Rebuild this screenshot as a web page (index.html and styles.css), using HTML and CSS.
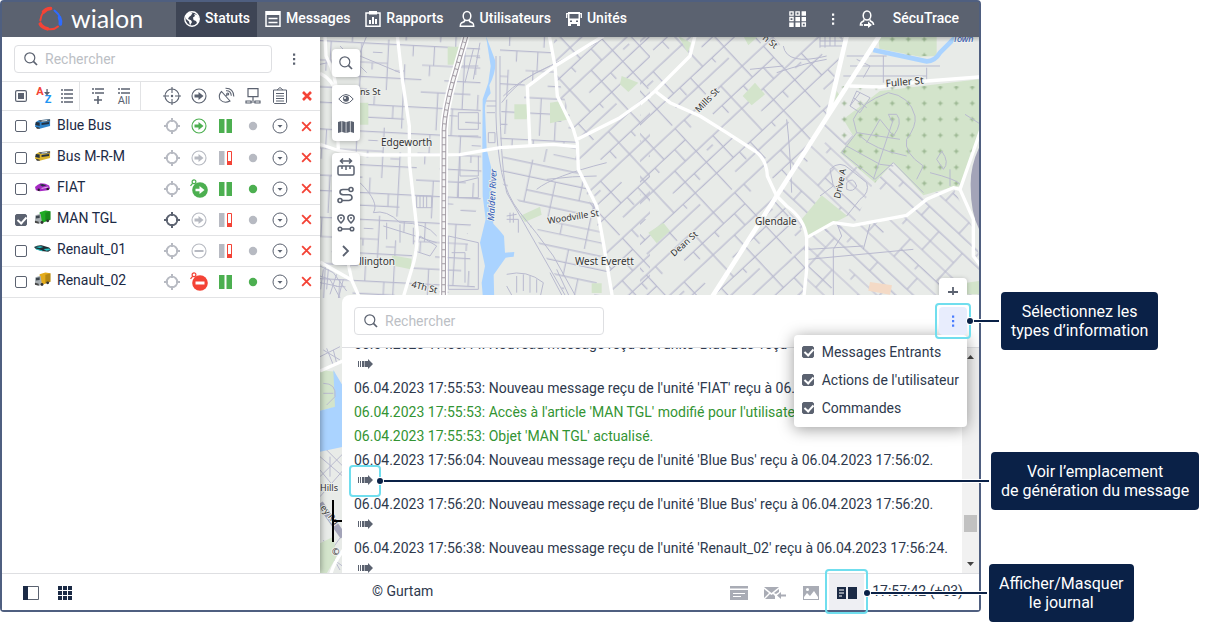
FILE: index.html
```html
<!DOCTYPE html>
<html lang="fr">
<head>
<meta charset="utf-8">
<title>Wialon – Statuts</title>
<link rel="stylesheet" href="styles.css">
</head>
<body>
<svg class="sprite" aria-hidden="true">
  <symbol id="i-search" viewBox="0 0 16 16"><circle cx="6.8" cy="6.8" r="5" fill="none" stroke="currentColor" stroke-width="1.2"/><path d="M10.4 10.4L14 14" stroke="currentColor" stroke-width="1.7"/></symbol>
  <symbol id="i-dots" viewBox="0 0 16 16"><path d="M7 2.500h2.200v2.200H7zM7 7h2.200v2.200H7zM7 11.500h2.200v2.200H7z" fill="currentColor"/></symbol>
  <symbol id="i-target" viewBox="0 0 18 18"><g fill="none" stroke="currentColor"><circle cx="9" cy="9" r="5.300" stroke-width="1.800"/><path d="M9 1v4M9 13v4M1 9h4M13 9h4" stroke-width="2"/></g></symbol>
  <symbol id="i-arrow" viewBox="0 0 18 18"><circle cx="9" cy="9" r="7" fill="none" stroke="currentColor" stroke-width="1.100"/><path d="M4.500 7.500h4V5l5 4-5 4v-2.500h-4z" fill="currentColor"/></symbol>
  <symbol id="i-stop" viewBox="0 0 18 18"><circle cx="9" cy="9" r="7" fill="none" stroke="currentColor" stroke-width="1.100"/><path d="M4.500 8h9v2h-9z" fill="currentColor"/></symbol>
  <symbol id="i-arrow-live" viewBox="0 0 20 20"><circle cx="11" cy="11" r="7.800" fill="currentColor"/><path d="M6.500 9.700h4V7l5 4-5 4v-2.700h-4z" fill="#fff"/><circle cx="5" cy="2.800" r="1.900" fill="#fff" stroke="currentColor" stroke-width="1.200"/><path d="M3.600 4.300L1.500 6.800" stroke="currentColor" stroke-width="1.300"/></symbol>
  <symbol id="i-stop-live" viewBox="0 0 20 20"><circle cx="11" cy="11" r="7.800" fill="currentColor"/><path d="M6.500 9.500h9v3h-9z" fill="#fff"/><circle cx="5" cy="2.800" r="1.900" fill="#fff" stroke="currentColor" stroke-width="1.200"/><path d="M3.600 4.300L1.500 6.800" stroke="currentColor" stroke-width="1.300"/></symbol>
  <symbol id="i-bars-on" viewBox="0 0 14 14"><path d="M0 0h5.500v14H0zM7.500 0H13v14H7.500z" fill="#4caf50"/></symbol>
  <symbol id="i-bars-low" viewBox="0 0 14 14"><path d="M0 0h5.500v14H0z" fill="#b7bac2"/><path d="M8.500.5h4v13h-4z" fill="#fff" stroke="#f44336"/><path d="M8 10h5v4H8z" fill="#f44336"/></symbol>
  <symbol id="i-dot" viewBox="0 0 10 10"><circle cx="5" cy="5" r="4.200" fill="currentColor"/></symbol>
  <symbol id="i-more" viewBox="0 0 18 18"><circle cx="9" cy="9" r="7" fill="none" stroke="currentColor"/><path d="M6.500 8h5L9 10.700z" fill="currentColor"/></symbol>
  <symbol id="i-x" viewBox="0 0 12 12"><path d="M2 2l8 8M10 2l-8 8" stroke="#f44336" stroke-width="1.700"/></symbol>
  <symbol id="i-move" viewBox="0 0 16 12"><path d="M1 3h1v6H1zM3 3h1v6H3zM5 3h2v6H5z" fill="#5b6270"/><path d="M7.500 3H11V1l5 5-5 5V9H7.500z" fill="#5b6270"/></symbol>
  <symbol id="i-user" viewBox="0 0 16 18"><g fill="none" stroke="currentColor" stroke-width="1.500"><ellipse cx="8" cy="6" rx="3.800" ry="4.600"/><path d="M5.500 9.800v1.700L2.300 13Q1.400 13.600 1.300 16.200h13.400Q14.600 13.600 13.700 13l-3.200-1.500V9.800"/></g></symbol>
  <symbol id="i-bus-icon" viewBox="0 0 18 12"><path d="M5 2l12-1v7L6 11 1 9 2 4z" fill="var(--paint)"/><path d="M5 2l12-1v2L7 4z" fill="#555d66"/><path d="M2 4l4 .5V8L1.300 7zM8 5l8-1v2L8 7z" fill="#243140"/><path d="M2 9l4 1v1H3z" fill="#333"/><path d="M8 3l6-.8" stroke="#d7e7ef"/></symbol>
  <symbol id="i-car-icon" viewBox="0 0 18 12"><path d="M1 6Q4 3 7 2l5 .5 4 2 1 3-2 2-9 1-4-1z" fill="var(--paint)"/><path d="M6 3.500l3-.7 4 1.700-4 1z" fill="#263340"/><circle cx="5" cy="9" r="1.300" fill="#222"/><circle cx="14.500" cy="8" r="1.300" fill="#222"/><path d="M8 7.500l7-1.500" stroke="#fff" stroke-opacity=".7"/></symbol>
  <symbol id="i-sport-icon" viewBox="0 0 18 12"><path d="M0 4Q4 1.500 8 2l8 2.500 2 2.500-3 2-7-1-6-2z" fill="#1f2d33"/><path d="M1 4l6-1 3 1-4 1zM10 6l6-.5 1 1.500-4 .8z" fill="var(--paint)"/><path d="M2 6l7 2" stroke="var(--paint)"/></symbol>
  <symbol id="i-truck-icon" viewBox="0 0 18 15"><path d="M6 2l6-2 5.500 1v9L9 13 6 12z" fill="var(--paint)"/><path d="M12 2.500l5.500-1.500v9L12 12z" fill="#000" fill-opacity=".2"/><path d="M1.500 5L7 3.500l1.500 9.500-3 1-4.500-2z" fill="#a8afb3"/><path d="M2 6l4-.8V8L2 8.500z" fill="#3a444c"/><path d="M1 11l4 1v2l-4-1z" fill="#444"/><circle cx="14.500" cy="11" r="1.500" fill="#333"/><circle cx="8.500" cy="12.800" r="1.500" fill="#333"/></symbol>
</svg>

<div class="page">
<div class="app">
  <header class="topbar">
    <a class="brand" href="#">
      <svg width="26" height="26" viewBox="0 0 26 26" aria-hidden="true"><g fill="none" stroke-linecap="round"><path d="M14 2.300Q10 1.800 6.800 5.500Q4 9 3.300 14.500" stroke="#f44336" stroke-width="2"/><path d="M13.500 2.500Q9.500 2.500 6.500 6" stroke="#f44336" stroke-width="3.600"/><path d="M3.500 18Q6 22.500 12.500 23.300Q17.500 23.700 21 20.500" stroke="#f44336" stroke-width="2"/><path d="M3.300 18Q5 21.500 10.500 22.800" stroke="#f44336" stroke-width="3.600"/><path d="M17.500 4.500Q22 8 23 12" stroke="#2f6bff" stroke-width="2"/><path d="M22.500 11.500Q24 15 23.300 18" stroke="#2f6bff" stroke-width="3.600"/></g></svg>
      <span>wialon</span>
    </a>
    <nav class="tabs">
      <a class="tab active" href="#"><svg width="16" height="16" viewBox="0 0 16 16"><circle cx="8" cy="8" r="7.200" fill="none" stroke="#fff" stroke-width="1.400"/><path d="M2.200 3.300L6 1.200l2.500.8L7 4.500 5 6 4 8l3 1.200L8 11l-2 3.500-1-4L2 8 1 5.500zM10 3l3.500 1L15.500 8l-2 5-1.500-3-2.500-1-.5-2.500L11 5z" fill="#fff"/></svg>Statuts</a>
      <a class="tab" href="#"><svg width="16" height="16" viewBox="0 0 16 16"><path d="M1 .8h14v14.400H1z" fill="none" stroke="#fff" stroke-width="1.500"/><path d="M1 1h14v3H1z" fill="#fff"/><path d="M3.500 7.500h9M3.500 11.500h9" stroke="#fff" stroke-width="1.400"/></svg>Messages</a>
      <a class="tab" href="#"><svg width="16" height="16" viewBox="0 0 16 16"><path d="M1 2h14v13.200H1z" fill="none" stroke="#fff" stroke-width="1.500"/><path d="M4 0h8v3.500H4zM4 9h2v4H4zM7 6h2v7H7zM10 8h2v5h-2z" fill="#fff"/></svg>Rapports</a>
      <a class="tab" href="#"><svg width="16" height="18"><use href="#i-user"/></svg>Utilisateurs</a>
      <a class="tab" href="#"><svg width="16" height="16" viewBox="0 0 16 16"><path d="M2 1h12v14h-3v-2H5v2H2z" fill="#fff"/><path d="M3.500 3h9v4.500h-9zM4 9.500h2V11H4zM10 9.500h2V11h-2z" fill="#5b6270"/><path d="M2 2.700H.7V7M14 2.700h1.300V7" fill="none" stroke="#fff" stroke-width="1.300"/></svg>Unités</a>
    </nav>
    <div class="account">
      <button class="bare" aria-label="Applications"><svg width="18" height="16" viewBox="0 0 18 16"><g fill="none" stroke="#fff" stroke-width="1.300"><path d="M.9.900h3.200v3.200H.9zM7 .9h3.200v3.200H7zM.9 6.500h3.200v3.200H.9zM13.200 12h3.200v3.200h-3.200z"/></g><path d="M12.600.2H17v4.500h-4.400zM6.400 6H11v4.300H6.400zM12.600 6H17v4.300h-4.400zM.2 11.400h4.500v4.500H.2zM6.400 11.400H11v4.500H6.400z" fill="#fff"/></svg></button>
      <button class="bare" aria-label="Plus"><svg width="16" height="16"><use href="#i-dots"/></svg></button>
      <button class="bare" aria-label="Profil"><svg width="16" height="18" viewBox="0 0 16 18"><g fill="none" stroke="#fff" stroke-width="1.500"><ellipse cx="8" cy="5.500" rx="3.800" ry="4.500"/><path d="M5 9.500l-.3 1.500Q1.500 12 1.400 15H4M11 9.500l.3 1.500q3.200 1 3.300 4"/></g><path d="M5 14h4v-2.500l4 3.500-4 3V16H5z" fill="#fff"/></svg></button>
      <span>SécuTrace</span>
    </div>
  </header>

  <div class="workspace">
    <section class="sidebar">
      <div class="finder">
        <label class="search"><svg width="16" height="16"><use href="#i-search"/></svg><input type="text" placeholder="Rechercher" aria-label="Rechercher une unité"></label>
        <button class="bare" aria-label="Options"><svg width="16" height="16"><use href="#i-dots"/></svg></button>
      </div>
      <div class="tools">
        <div class="tool-set first">
          <button class="bare" aria-label="Tout sélectionner"><svg width="12" height="12" viewBox="0 0 12 12"><rect x=".6" y=".6" width="10.800" height="10.800" rx="1.500" fill="none" stroke="currentColor" stroke-width="1.200"/><path d="M3 3h6v6H3z" fill="currentColor"/></svg></button>
          <button class="bare sort" aria-label="Trier de A à Z"><b class="sort-a">A</b><b class="sort-z">Z</b><svg width="6" height="7" viewBox="0 0 6 7"><path d="M2.400 0h1.300v3H6L3 6.500 0 3h2.400z" fill="currentColor"/></svg></button>
          <button class="bare" aria-label="Liste"><svg width="12" height="14" viewBox="0 0 12 14"><path d="M0 1h2M0 5h2M0 9h2M0 13h2M3 1h9M3 5h9M3 9h9M3 13h9" stroke="currentColor" stroke-width="1.600"/></svg></button>
        </div>
        <div class="tool-set second">
          <button class="bare" aria-label="Ajouter"><svg width="14" height="18" viewBox="0 0 14 18"><path d="M1 2h2M1 6h2M4 2h9M4 6h9M7 9v8M3 13h8" stroke="currentColor" stroke-width="1.600"/></svg></button>
          <button class="bare all" aria-label="Ajouter tout"><svg width="14" height="7" viewBox="0 0 14 7"><path d="M1 1h2M1 5h2M4 1h9M4 5h9" stroke="currentColor" stroke-width="1.500"/></svg><span>All</span></button>
        </div>
        <div class="tool-cols">
          <button class="bare" aria-label="Suivre"><svg width="18" height="18" viewBox="0 0 18 18"><g fill="none" stroke="currentColor" stroke-width="1.100"><circle cx="9" cy="9" r="7"/><path d="M9 0v6M9 12v6M0 9h6M12 9h6"/></g><circle cx="9" cy="9" r="1.200" fill="currentColor"/></svg></button>
          <button class="bare" aria-label="Mouvement"><svg width="18" height="18"><use href="#i-arrow"/></svg></button>
          <button class="bare" aria-label="Connexion satellite"><svg width="18" height="18" viewBox="0 0 18 18"><g fill="none" stroke="currentColor" stroke-width="1.100"><path d="M4.500 4.500Q1 8 3 12.500Q7 17 13 14zM8.500 9.500l1.500-2"/><circle cx="10.700" cy="7" r="1"/><path d="M9 3.800q5-.5 5.300 5M8.500 1.200Q16.500 1 16.800 9.500"/></g></svg></button>
          <button class="bare" aria-label="Capteurs"><svg width="16" height="16" viewBox="0 0 16 16"><path d="M3 .7h10v8H3zM8 9v4M1 15v-2h5v2zM10 15v-2h5v2zM6 14h4" fill="none" stroke="currentColor" stroke-width="1.200"/></svg></button>
          <button class="bare" aria-label="Rapport"><svg width="16" height="18" viewBox="0 0 16 18"><path d="M1.500 3h13v12.500l-1 1h-11l-1-1zM5 3l3-2.500L11 3M4 6.500h8M4 9h8M4 11.500h8M4 14h8" fill="none" stroke="currentColor"/></svg></button>
          <button class="bare" aria-label="Tout retirer"><svg width="12" height="12" viewBox="0 0 12 12"><path d="M2 2l8 8M10 2l-8 8" stroke="#f44336" stroke-width="2.600"/></svg></button>
        </div>
      </div>
      <table class="units">
        <colgroup><col class="c-check"><col class="c-pic"><col><col class="c-act"><col class="c-act"><col class="c-act"><col class="c-act"><col class="c-act"><col class="c-act"></colgroup>
        <tbody>
        <tr><td><input class="tick" type="checkbox" id="u1"></td><td><svg class="pic blue" width="17" height="12"><use href="#i-bus-icon"/></svg></td><td class="name"><label for="u1">Blue Bus</label></td>
          <td class="off"><svg width="18" height="18"><use href="#i-target"/></svg></td><td class="ok"><svg width="18" height="18"><use href="#i-arrow"/></svg></td><td><svg width="14" height="14"><use href="#i-bars-on"/></svg></td><td class="off"><svg width="10" height="10"><use href="#i-dot"/></svg></td><td><svg width="18" height="18"><use href="#i-more"/></svg></td><td><svg width="13" height="13"><use href="#i-x"/></svg></td></tr>
        <tr><td><input class="tick" type="checkbox" id="u2"></td><td><svg class="pic yellow" width="17" height="12"><use href="#i-bus-icon"/></svg></td><td class="name"><label for="u2">Bus M-R-M</label></td>
          <td class="off"><svg width="18" height="18"><use href="#i-target"/></svg></td><td class="off"><svg width="18" height="18"><use href="#i-arrow"/></svg></td><td><svg width="14" height="14"><use href="#i-bars-low"/></svg></td><td class="off"><svg width="10" height="10"><use href="#i-dot"/></svg></td><td><svg width="18" height="18"><use href="#i-more"/></svg></td><td><svg width="13" height="13"><use href="#i-x"/></svg></td></tr>
        <tr><td><input class="tick" type="checkbox" id="u3"></td><td><svg class="pic purple" width="17" height="12"><use href="#i-car-icon"/></svg></td><td class="name"><label for="u3">FIAT</label></td>
          <td class="off"><svg width="18" height="18"><use href="#i-target"/></svg></td><td class="ok"><svg width="20" height="20"><use href="#i-arrow-live"/></svg></td><td><svg width="14" height="14"><use href="#i-bars-on"/></svg></td><td class="ok"><svg width="10" height="10"><use href="#i-dot"/></svg></td><td><svg width="18" height="18"><use href="#i-more"/></svg></td><td><svg width="13" height="13"><use href="#i-x"/></svg></td></tr>
        <tr><td><input class="tick" type="checkbox" id="u4" checked></td><td><svg class="pic green" width="17" height="15"><use href="#i-truck-icon"/></svg></td><td class="name"><label for="u4">MAN TGL</label></td>
          <td><svg width="18" height="18"><use href="#i-target"/></svg></td><td class="off"><svg width="18" height="18"><use href="#i-arrow"/></svg></td><td><svg width="14" height="14"><use href="#i-bars-low"/></svg></td><td class="off"><svg width="10" height="10"><use href="#i-dot"/></svg></td><td><svg width="18" height="18"><use href="#i-more"/></svg></td><td><svg width="13" height="13"><use href="#i-x"/></svg></td></tr>
        <tr><td><input class="tick" type="checkbox" id="u5"></td><td><svg class="pic cyan" width="17" height="12"><use href="#i-sport-icon"/></svg></td><td class="name"><label for="u5">Renault_01</label></td>
          <td class="off"><svg width="18" height="18"><use href="#i-target"/></svg></td><td class="off"><svg width="18" height="18"><use href="#i-stop"/></svg></td><td><svg width="14" height="14"><use href="#i-bars-low"/></svg></td><td class="off"><svg width="10" height="10"><use href="#i-dot"/></svg></td><td><svg width="18" height="18"><use href="#i-more"/></svg></td><td><svg width="13" height="13"><use href="#i-x"/></svg></td></tr>
        <tr><td><input class="tick" type="checkbox" id="u6"></td><td><svg class="pic gold" width="17" height="15"><use href="#i-truck-icon"/></svg></td><td class="name"><label for="u6">Renault_02</label></td>
          <td class="off"><svg width="18" height="18"><use href="#i-target"/></svg></td><td class="bad"><svg width="20" height="20"><use href="#i-stop-live"/></svg></td><td><svg width="14" height="14"><use href="#i-bars-on"/></svg></td><td class="ok"><svg width="10" height="10"><use href="#i-dot"/></svg></td><td><svg width="18" height="18"><use href="#i-more"/></svg></td><td><svg width="13" height="13"><use href="#i-x"/></svg></td></tr>
        </tbody>
      </table>
    </section>

    <section class="map-area">
      <svg class="map" viewBox="320 37 659 536" preserveAspectRatio="xMinYMin slice" role="img" aria-label="Carte">
        <defs>
          <pattern id="p-ortho" width="270" height="230" patternUnits="userSpaceOnUse" patternTransform="rotate(3) scale(1.15)"><path d="M0 12H270M0 62H180M60 100H270M0 132H130M0 172H270M120 205H230M30 12V62M85 0V12M85 230V172M110 12V172M180 0V132M225 62V230M150 132V172M45 132V230M245 12V40M200 172V205M20 62V90M140 35H165M140 62V80M200 80H225M75 190H100" class="street"/></pattern>
          <pattern id="p-diag" width="290" height="210" patternUnits="userSpaceOnUse" patternTransform="rotate(-43) scale(1.25)"><path d="M0 10H290M0 46H200M0 84H290M90 120H290M0 156H290M0 184H120M60 10V156M130 0V46M130 84V184M130 210V184M200 10V210M255 84V156M20 156V210M30 46V70M165 46V84M230 10V34M160 120V140M90 156V170M275 156V180M100 46V62M220 100H240M235 184H290" class="street"/></pattern>
          <pattern id="p-long" width="260" height="190" patternUnits="userSpaceOnUse" patternTransform="rotate(43) scale(1.2)"><path d="M0 8H260M0 38H260M0 70H180M0 100H260M60 134H260M0 160H260M40 8V38M100 38V100M180 38V134M230 100V160M60 100V160M140 0V8M140 160V190M210 8V24M20 70V86M120 134V148" class="street"/></pattern>
          <pattern id="p-tilt" width="280" height="200" patternUnits="userSpaceOnUse" patternTransform="rotate(12) scale(1.15)"><path d="M0 10H280M0 45H280M50 80H280M0 112H200M0 148H280M100 176H280M50 0V112M120 45V148M190 10V80M230 80V200M160 148V176M80 148V200M20 112V148" class="street"/></pattern>
          <pattern id="p-cross" x="589" y="226" width="48" height="48" patternUnits="userSpaceOnUse"><path d="M24 17v14M17 24h14" stroke="#8dab83" stroke-width="3"/></pattern>
        </defs>
        <rect x="320" y="37" width="1600" height="1200" fill="#e8ebe8"/>
        <g transform="translate(320 36) scale(.33333)">
          <path d="M0 0H480L485 480 440 600 470 786H0Z" fill="url(#p-ortho)"/>
          <path d="M540 0H690L700 90 620 150 540 190Z" fill="url(#p-ortho)"/>
          <path d="M545 200L625 150 705 95 775 320 540 335Z" fill="url(#p-ortho)"/>
          <path d="M550 345L772 335 780 400 830 510 700 560 600 500 545 440Z" fill="url(#p-tilt)"/>
          <path d="M700 0H990V800H885L850 620 775 400 772 320 712 180Z" fill="url(#p-diag)"/>
          <path d="M630 570L830 520 880 786H740Z" fill="url(#p-tilt)"/>
          <g class="green">
            <path d="M383 32h36v54h-36zM120 200h25v66h-25zM905 120L955 140 925 168 900 145ZM583 205h42l-5 45h-37zM690 200l35-5 22 55-57 12zM600 540l60-28 5 24-50 22zM215 658l60 10-3 32-48-10zM815 742h30v29h-30z"/>
          </g>
          <g class="street">
            <path d="M0 85L120 60 240 110M60 30L140 110M140 0L110 75M120 440Q180 500 160 530Q200 520 240 560Q320 560 350 600M190 570L350 620M200 560v50M240 565v55M280 575v50M290 480h45v35h-45zM300 480v35M310 480v35M320 480v35M300 600l50 30-20 30-45-15z"/>
            <path d="M0 690l40 20 40 55M0 720l30 10 30 56M0 740l50 10M10 700l-8 60M25 700l-5 60M50 715l-20 60M70 730l-15 56"/>
            <path d="M415 230h60v50h-60zM415 300h60M420 360v60h55v-60M415 440l60-15v60h-60zM385 600l90 20v140h-90zM395 650h40v90M440 30l-30 90M460 40l-25 100M480 20l-20 110M430 60h50M425 90h50"/>
            <path d="M528 60V240Q530 330 545 410Q560 480 600 530Q650 590 700 660L770 786M540 60V230Q545 400 560 470L740 786M498 195h30M500 230h25M500 210h28M505 290h20v30h-20zM550 180Q600 130 690 90M545 200Q580 150 640 115L830 20"/>
            <path d="M680 430Q760 420 830 420M650 460Q700 420 860 380M560 540l30-5M560 550h35v40M570 530v30M580 530v30M560 715Q620 700 670 740L660 786H580L560 750M590 720v50M610 715v50M630 720v50M650 730v40M690 710l40 76M710 700l40 86"/>
          </g>
          <path class="water" d="M498 0L525 72Q530 105 508 148L512 172Q495 190 495 220L500 340 515 400 514 490 520 563 540 585 552 600 555 650 583 648 581 662 557 665 521 716 523 800H490L485 740 495 690 480 620 497 550 488 480 487 320 488 190 505 140 512 90Z"/>
          <g class="road">
            <path d="M232 0L247 130 268 270V380L292 590Q292 650 275 700L248 790M15 0L18 60Q50 120 50 180L55 345M0 112Q38 130 48 170M0 325L60 345 140 357 420 356 540 335 700 325 770 332"/>
            <path d="M0 678L95 732M80 660L95 732 125 800M850 0L705 90 622 152 630 330M688 0L705 90 712 180 760 280 772 320 775 400 830 510 850 620 880 800M990 180L900 245 772 310"/>
          </g>
          <path class="rail-edge" d="M438 0L400 130Q375 220 372 280L370 1000"/>
          <path class="rail-line" d="M438 0L400 130Q375 220 372 280L370 1000"/>
          <path class="rail-dash" d="M438 0L400 130Q375 220 372 280L370 1000"/>
        </g>
        <g transform="translate(640 36) scale(.33333)">
          <path d="M30 0H610L560 245 410 480 215 786H0V0Z" fill="url(#p-diag)"/>
          <path d="M410 480L565 240 640 300 605 350 680 420 700 440 640 568 500 605Z" fill="url(#p-long)"/>
          <path d="M500 605L580 560 640 568 800 538 700 440 760 385 850 478 940 455 1010 600 1030 800H490Z" fill="url(#p-long)"/>
          <path d="M215 786L410 480 500 605 490 786Z" fill="url(#p-diag)"/>
          <path class="green" d="M720 165L1030 128V270L960 450 930 455 850 478 760 380 705 440 600 350 640 300 610 250ZM715 0H890V60L840 62 718 38ZM545 478L622 540 505 600 485 550ZM345 140L375 175 335 208 308 180ZM70 560L90 585 50 622 25 590ZM310 0h45l-30 28zM115 0l28 50 10-30zM590 165l10 15-20 35zM980 740l40-5v40h-40z"/>
          <path d="M600 150H1030V270L960 450 850 478 760 380 705 440 600 350ZM715 0H890V60H800Z" fill="url(#p-cross)"/>
          <g class="street">
            <path d="M640 250Q660 200 745 170Q810 180 825 240Q830 270 800 310Q790 350 850 390L830 430M640 250L650 290 780 310M650 290L620 330 605 350 705 430 760 380 850 470M680 320L720 250 760 300Q790 260 770 235H745L755 255M660 300Q700 340 800 360M620 330L720 385 760 390M700 430L760 250M905 345Q930 380 910 400L890 370ZM870 410Q950 430 960 445M930 400v50M975 235L1030 270"/>
            <path d="M430 30Q440 90 560 60M410 110Q500 80 560 70M330 100L430 90M620 60h120M630 90h270M610 120h250M730 60v80M860 95v40M650 70l40 20-20 35"/>
            <path d="M540 35V0M555 35V0M570 30V0M585 30V0M540 15h80M540 30h70M650 165l40 20-30 45-30-20zM640 185l40 30M660 170l-30 40"/>
            <path d="M570 400Q600 370 630 400L680 440Q690 470 660 490L620 540M570 400L580 450 540 480M620 440Q640 420 650 450Q640 470 620 460ZM455 470Q450 330 440 250M590 560L605 600 580 640V780M690 565L670 640M505 640L670 630M505 670L820 640"/>
          </g>
          <path class="water-line" d="M700 42L860 76Q885 76 900 50L940 10 1030 -20"/>
          <path d="M1030 310Q990 380 992 450Q992 550 1030 600Z" fill="#a3a4b8"/>
          <path d="M690 738L756 748 750 776 685 764Z" fill="#f4dac6"/>
          <g class="road">
            <path d="M165 0L150 60 45 165 0 205M45 165L90 200 180 240 260 290 345 345Q380 370 382 420L410 480 440 510Q495 550 500 605V700L490 800M500 605L580 560 640 568 800 538 860 490 940 455 960 460 1030 260M960 460L1000 550V660L1030 700M628 150L720 153 860 135 1030 122"/>
            <path class="wide" d="M620 0L565 235M718 0L560 245 410 480 205 800"/>
          </g>
        </g>
        <g transform="translate(320 290) scale(.33333)">
          <path class="green" d="M0 240L45 245 50 350 0 362Z"/>
          <path class="water" d="M40 240L70 290V470L0 485V362L45 350Z"/>
          <path class="street" d="M10 180L60 210M0 200l60-30M20 175l20 50M40 180l10 40M10 280Q50 280 45 320L20 345M10 310h30M0 500L70 560M0 560L70 490M0 620L70 540M20 480L70 530M0 540l50 60M30 500v60M0 780l70 50M20 800l50-70M0 830l50-40M10 750l50 90"/>
          <path class="road" d="M0 243L70 212"/>
          <path d="M0 640L70 740" stroke="#a3a4b8" stroke-width="20"/>
          <path class="green" d="M0 760L40 740 50 800 20 850H0Z"/>
          <path class="road" d="M70 780Q40 820 30 860"/>
        </g>
        <g class="place">
          <text x="381" y="146">Edgeworth</text><text x="359" y="265">llington</text><text x="575" y="265">West Everett</text><text x="755" y="225">Glendale</text>
          <text x="886" y="87" transform="rotate(-5 886 87)">Fuller St</text>
        </g>
        <g class="lane">
          <text x="360" y="95">ns St</text><text x="411" y="287" transform="rotate(14 411 287)">4Th St</text><text x="548" y="224" transform="rotate(-9 548 224)">Woodville St</text>
          <text x="699" y="113" transform="rotate(-46 699 113)">Mills St</text><text x="674" y="257" transform="rotate(-42 674 257)">Dean St</text><text x="840" y="199" transform="rotate(-78 840 199)">Drive A</text><text x="762" y="39" transform="rotate(38 762 39)">n St</text>
          <text x="320" y="491">Hills</text><text x="320" y="508" transform="rotate(50 320 508)">ey Rd</text><text x="332" y="555">©</text>
          <text class="river" x="494" y="221" transform="rotate(-87 494 221)">Malden River</text><text class="river" x="953" y="42">Town</text>
        </g>
        <path d="M333 500v42M333 521h12" stroke="#000" stroke-width="2" fill="none"/>
      </svg>
      <div class="map-tools">
        <div class="map-group"><button class="bare" aria-label="Rechercher sur la carte"><svg width="16" height="16"><use href="#i-search"/></svg></button></div>
        <div class="map-group"><button class="bare" aria-label="Visibilité"><svg width="16" height="12" viewBox="0 0 16 12"><path d="M.8 6Q8-3 15.200 6Q8 15 .8 6Z" fill="none" stroke="currentColor"/><circle cx="8" cy="5.800" r="3" fill="currentColor"/><circle cx="7" cy="5" r="1" fill="#fff"/></svg></button>
        <button class="bare" aria-label="Couches"><svg width="16" height="12" viewBox="0 0 16 12"><path d="M0 1l3.500-1v11L0 12zM4.200 0l3.500 1v11l-3.500-1zM8.400 1l3.500-1v11l-3.500 1zM12.600 0L16 1v11l-3.400-1z" fill="currentColor"/></svg></button></div>
        <div class="map-group tall"><button class="bare" aria-label="Mesurer"><svg width="18" height="18" viewBox="0 0 18 18"><g fill="none" stroke="currentColor" stroke-width="1.500"><rect x="1" y="8" width="16" height="9" rx="1.500"/><path d="M5 8v3M9 8v4M13 8v3M3.500 3h11M6 .5L3.500 3 6 5.500M12 .5L14.500 3 12 5.500"/></g></svg></button>
        <button class="bare" aria-label="Itinéraire"><svg width="18" height="18" viewBox="0 0 18 18"><g fill="none" stroke="currentColor" stroke-width="1.600"><circle cx="14" cy="3.500" r="2"/><circle cx="3" cy="14.500" r="2"/><path d="M12 3.500H6Q3 3.500 3 6T6 8.700h6Q15 9 15 11.500T12 14.500H5"/></g></svg></button>
        <button class="bare" aria-label="Points"><svg width="18" height="18" viewBox="0 0 18 18"><g fill="none" stroke="currentColor" stroke-width="1.500"><path d="M4 9Q.8 6 .8 4Q1 1 4 1T7.200 4Q7.200 6 4 9ZM14 9Q10.800 6 10.800 4Q11 1 14 1T17.200 4Q17.200 6 14 9Z"/><circle cx="3" cy="15" r="1.800"/><circle cx="15" cy="15" r="1.800"/><path d="M5 15h8"/></g><circle cx="4" cy="4" r="1" fill="currentColor"/><circle cx="14" cy="4" r="1" fill="currentColor"/></svg></button>
        <button class="bare" aria-label="Développer"><svg width="10" height="12" viewBox="0 0 10 12"><path d="M2 1l5 5-5 5" fill="none" stroke="currentColor" stroke-width="1.800"/></svg></button></div>
      </div>
      <button class="bare zoom-in" aria-label="Zoom avant"><svg width="12" height="12" viewBox="0 0 12 12"><path d="M6 1v10M1 6h10" stroke="currentColor" stroke-width="1.800"/></svg></button>

      <section class="log">
        <div class="log-head">
          <label class="search"><svg width="16" height="16"><use href="#i-search"/></svg><input type="text" placeholder="Rechercher" aria-label="Rechercher dans le journal"></label>
          <div class="log-menu">
            <button class="bare menu-button marked" aria-label="Types d’information"><svg width="16" height="16"><use href="#i-dots"/></svg></button>
            <div class="menu">
              <label><input class="tick" type="checkbox" checked>Messages Entrants</label>
              <label><input class="tick" type="checkbox" checked>Actions de l'utilisateur</label>
              <label><input class="tick" type="checkbox" checked>Commandes</label>
            </div>
          </div>
        </div>
        <div class="log-body">
          <ul class="entries">
            <li>06.04.2023 17:55:44: Nouveau message reçu de l'unité 'Blue Bus' reçu<div class="go"><button class="bare" aria-label="Voir l’emplacement"><svg width="16" height="12"><use href="#i-move"/></svg></button></div></li>
            <li>06.04.2023 17:55:53: Nouveau message reçu de l'unité 'FIAT' reçu à 06.</li>
            <li class="system">06.04.2023 17:55:53: Accès à l'article 'MAN TGL' modifié pour l'utilisateur</li>
            <li class="system">06.04.2023 17:55:53: Objet 'MAN TGL' actualisé.</li>
            <li>06.04.2023 17:56:04: Nouveau message reçu de l'unité 'Blue Bus' reçu à 06.04.2023 17:56:02.<div class="go"><button class="bare marked" aria-label="Voir l’emplacement"><svg width="16" height="12"><use href="#i-move"/></svg></button></div></li>
            <li>06.04.2023 17:56:20: Nouveau message reçu de l'unité 'Blue Bus' reçu à 06.04.2023 17:56:20.<div class="go"><button class="bare" aria-label="Voir l’emplacement"><svg width="16" height="12"><use href="#i-move"/></svg></button></div></li>
            <li>06.04.2023 17:56:38: Nouveau message reçu de l'unité 'Renault_02' reçu à 06.04.2023 17:56:24.<div class="go"><button class="bare" aria-label="Voir l’emplacement"><svg width="16" height="12"><use href="#i-move"/></svg></button></div></li>
          </ul>
          <div class="scroll" aria-hidden="true"><svg width="7" height="4" viewBox="0 0 7 4"><path d="M0 4l3.500-4L7 4z" fill="#444"/></svg><i class="space"></i><i class="thumb"></i><i class="rest"></i><svg width="7" height="4" viewBox="0 0 7 4"><path d="M0 0h7L3.500 4z" fill="#444"/></svg></div>
        </div>
      </section>
    </section>
  </div>

  <footer class="statusbar">
    <div class="views">
      <button class="bare" aria-label="Panneau"><svg width="16" height="14" viewBox="0 0 16 14"><path d="M.5.500h15v13H.5z" fill="#fff" stroke="#5b6270"/><path d="M0 0h5v14H0z" fill="#1b2a45"/></svg></button>
      <button class="bare" aria-label="Grille"><svg width="14" height="14" viewBox="0 0 14 14"><path d="M0 0h4v4H0zM5 0h4v4H5zM10 0h4v4h-4zM0 5h4v4H0zM5 5h4v4H5zM10 5h4v4h-4zM0 10h4v4H0zM5 10h4v4H5zM10 10h4v4h-4z" fill="#1b2a45"/></svg></button>
    </div>
    <a class="copy" href="#">© Gurtam</a>
    <div class="panels">
      <button class="bare" aria-label="Notifications"><svg width="18" height="14" viewBox="0 0 18 14"><path d="M0 0h18v2.500H0zM0 4h18v10H0z" fill="#a9acb5"/><path d="M3 7.500h12M3 10.500h8" stroke="#fff"/></svg></button>
      <button class="bare" aria-label="Messages reçus"><svg width="22" height="14" viewBox="0 0 22 14"><path d="M0 1h15L7.500 7zM0 3l5 4-5 5zM6 8l1.500 1L9 8l2 2v3H1zM15 3v3l-3 2-2-1z" fill="#a9acb5"/><path d="M13 9.500l4-3.500v2.500h5v2h-5V13z" fill="#a9acb5"/></svg></button>
      <button class="bare" aria-label="Images"><svg width="16" height="14" viewBox="0 0 16 14"><path d="M0 0h16v14H0z" fill="#a9acb5"/><path d="M1 11l3-4 3 3 4-5 4 6v2H1z" fill="#fff"/><circle cx="4.500" cy="3.500" r="1.500" fill="#fff"/></svg></button>
      <button class="bare marked journal" aria-label="Journal"><svg width="20" height="12" viewBox="0 0 20 12"><path d="M0 0h9v12H0zM11 0h9v12h-9z" fill="#1b2a45"/><path d="M2 3h5M2 6h5M2 9h3" stroke="#fff" stroke-width="1.200"/></svg></button>
      <time>17:57:42 (+03)</time>
    </div>
  </footer>
</div>

<aside class="notes">
  <p class="note types">Sélectionnez les<br>types d’information</p>
  <p class="note place-note">Voir l’emplacement<br>de génération du message</p>
  <p class="note journal-note">Afficher/Masquer<br>le journal</p>
</aside>
</div>
</body>
</html>
```
FILE: styles.css
```css
* { box-sizing: border-box; }
body { margin: 0; background: #fff; color: #2e394d; font: 14px/20px Roboto, sans-serif; }
a { color: inherit; text-decoration: none; }
svg { display: block; flex: none; }
.sprite { position: absolute; width: 0; height: 0; }
.bare { display: flex; align-items: center; justify-content: center; padding: 0; border: 0; background: none; color: #5b6270; font: inherit; cursor: pointer; }

.page { display: flex; min-height: 100vh; }
.app { flex: 1; min-width: 0; height: calc(100vh - 12px); display: flex; flex-direction: column; border: 2px solid #4f5f80; border-radius: 4px; }

.topbar { display: flex; height: 35px; flex: none; background: #5b6270; color: #fff; }
.topbar .bare { color: #fff; }
.brand { display: flex; align-items: center; gap: 8px; width: 174px; padding: 0 0 2px 35px; font: 400 25px/30px Lato, sans-serif; }
.brand span { padding-bottom: 2px; }
.tabs { display: flex; font-weight: 500; }
.tab { display: flex; align-items: center; gap: 5px; padding: 0 7px 4px 8px; }
.tab svg { margin-top: 2px; }
.tab.active { background: #3e4555; }
.account { display: flex; align-items: center; gap: 18px; margin-left: auto; padding: 0 20px 4px 0; font-weight: 500; }
.account .bare { margin-top: 3px; }

.workspace { flex: 1; min-height: 0; display: grid; grid-template-columns: 318px 1fr; }
.sidebar { position: relative; background: #fff; box-shadow: 1px 0 6px rgba(0, 0, 0, .35); z-index: 2; clip-path: inset(0 -8px 0 0); }
.finder { display: flex; align-items: center; gap: 14px; height: 44px; padding: 0 12px; }
.search { display: flex; align-items: center; gap: 6px; height: 28px; padding: 0 8px; border: 1px solid #dedfe2; border-radius: 4px; background: #fff; color: #5b6270; }
.search input { flex: 1; min-width: 0; padding: 0; border: 0; outline: 0; background: none; font: inherit; color: #1b2a45; }
.search input::placeholder { color: #bcbfc5; }
.finder .search { width: 258px; }

.tools { display: flex; height: 30px; border-top: 1px solid #e2e3e5; border-bottom: 1px solid #e2e3e5; }
.tool-set { display: flex; align-items: center; border-right: 1px solid #e2e3e5; }
.first { width: 78px; gap: 9px; padding-left: 13px; }
.second { width: 61px; gap: 12px; padding-left: 11px; }
.sort { display: grid; grid-template-columns: 8px 8px; font-size: 11px; line-height: 8px; }
.sort-a { color: #f44336; grid-area: 1 / 1; }
.sort-z { color: #2196f3; grid-area: 2 / 2; }
.sort svg { grid-area: 1 / 2; }
.all { flex-direction: column; gap: 1px; font-size: 11px; line-height: 9px; }
.tool-cols { display: grid; grid-template-columns: repeat(6, 27px); margin-left: auto; }

.units { width: 100%; border-collapse: collapse; table-layout: fixed; color: #5b6270; }
.c-check { width: 32px; }
.c-pic { width: 20px; }
.c-act { width: 27px; }
.units td { height: 31px; padding: 0; border-bottom: 1px solid #e2e3e5; }
.units td svg { margin: 0 auto; }
.units td .pic { margin: 0 0 4px; }
.units td:first-child { padding-left: 13px; }
.units .name { padding: 0 0 3px 3px; color: #1b2a45; }
.units .off { color: #b7bac2; }
.units .ok { color: #4caf50; }
.units .bad { color: #f44336; }
.tick { display: block; appearance: none; width: 12px; height: 12px; margin: 0; border: 1px solid #5b6270; border-radius: 2px; background: #fff; flex: none; }
.tick:checked { background: #5b6270; }
.tick:checked::before { content: ""; display: block; width: 4px; height: 7px; margin: 0 3px; border: solid #fff; border-width: 0 2px 2px 0; transform: rotate(42deg); }
.blue { --paint: #2f83c9; }
.yellow { --paint: #d9b32c; }
.purple { --paint: #a62bc4; }
.green.pic { --paint: #1eaa24; }
.cyan { --paint: #26c6c8; }
.gold { --paint: #e3ab1a; }

.map-area { position: relative; overflow: hidden; min-width: 0; }
.map-area::before { content: ""; position: absolute; inset: 0 0 auto; height: 5px; background: linear-gradient(rgba(0, 0, 0, .2), transparent); z-index: 1; }
.map { position: absolute; inset: 0; width: 100%; height: 100%; }
.street { fill: none; stroke: #b9bacf; stroke-width: 3; }
.road { fill: none; stroke: #fff; stroke-width: 10; stroke-linejoin: round; }
.road .wide { stroke-width: 14; }
.map .green { fill: #d3e4cb; }
.water { fill: #aad3ff; }
.water-line { fill: none; stroke: #aad3ff; stroke-width: 14; }
.rail-edge { fill: none; stroke: #fff; stroke-width: 24; }
.rail-line { fill: none; stroke: #a39ca5; stroke-width: 14; }
.rail-dash { fill: none; stroke: #f6f6f6; stroke-width: 8; stroke-dasharray: 18 3; }
.place, .lane { font-family: "Noto Sans", sans-serif; fill: #333; stroke: #eef0ee; stroke-width: 2px; paint-order: stroke; }
.place { font-size: 10px; }
.lane { font-size: 9px; }
.river { font-style: italic; fill: #2c55b5; }

.map-tools { position: absolute; left: 12px; top: 12px; display: grid; gap: 8px; }
.map-group { border-radius: 4px; background: #fff; box-shadow: 0 1px 5px rgba(0, 0, 0, .25); }
.map-group.tall { margin-top: 4px; }
.map-group .bare { width: 28px; height: 28px; }
.zoom-in { position: absolute; right: 12px; top: 241px; width: 28px; height: 28px; border-radius: 4px; background: #fff; box-shadow: 0 1px 5px rgba(0, 0, 0, .25); }

.log { position: absolute; inset: 258px 0 0 22px; display: flex; flex-direction: column; border-radius: 8px 0 0 0; background: #fff; z-index: 1; }
.log-head { display: flex; justify-content: space-between; align-items: center; height: 53px; flex: none; padding: 0 12px; border-bottom: 1px solid #dedfe2; }
.log .search { width: 250px; }
.log-menu { position: relative; z-index: 2; }
.menu-button { width: 28px; height: 28px; border-radius: 4px; background: #e8edfd; color: #4a7dff; }
.marked { position: relative; z-index: 2; }
.marked::after { content: ""; position: absolute; inset: -4px; border: 2px solid #70deee; border-radius: 4px; }
.menu { position: absolute; top: 28px; right: 0; padding: 3px 8px 5px; border-radius: 4px; background: #fff; box-shadow: 0 2px 16px rgba(0, 0, 0, .4); white-space: nowrap; }
.menu label { display: flex; align-items: center; gap: 8px; height: 28px; }
.log-body { flex: 1; min-height: 0; display: flex; overflow: hidden; }
.entries { flex: 1; min-width: 0; margin: -16px 0 0; padding: 0 0 0 12px; list-style: none; line-height: 24px; white-space: nowrap; }
.entries .system { color: #339433; }
.go { display: flex; align-items: flex-start; height: 20px; padding: 2px 0 0 3px; }
.go .marked::after { inset: -9px -8px -11px; }
.scroll { display: flex; flex-direction: column; align-items: center; width: 17px; padding: 7px 0; background: #f1f1f1; }
.thumb { width: 13px; height: 17px; background: #c1c1c1; }
.space { flex: 157; }
.rest { flex: 30; }

.statusbar { display: flex; align-items: center; height: 37px; flex: none; border-top: 1px solid #dedfe2; background: #fff; }
.views { display: flex; gap: 19px; width: 318px; padding: 2px 0 0 21px; }
.copy { padding: 0 0 2px 52px; }
.panels { display: flex; align-items: stretch; height: 100%; margin-left: auto; padding-right: 16px; }
.panels .bare { width: 36px; padding-top: 2px; }
.panels .journal { width: 35px; background: #eeeff3; }
.journal::after { inset: -5px -4px -4px; }
.panels time { padding: 7px 0 0 8px; }

.notes { position: relative; z-index: 5; width: 240px; flex: none; padding: 292px 0 0 8px; }
.note { position: relative; width: max-content; margin: 0; padding: 10px; border-radius: 4px; background: #0a2147; color: #fff; font-size: 16px; line-height: 19px; text-align: center; }
.note::before { content: ""; position: absolute; right: calc(100% + 2px); top: 28px; height: 2px; width: var(--reach); background: #0a2147; box-shadow: 0 0 0 1px #fff; }
.note::after { content: ""; position: absolute; right: calc(100% - 1px + var(--reach)); top: 26px; width: 6px; height: 6px; border-radius: 50%; background: #0a2147; box-shadow: 0 0 0 1px #fff; }
.types { --reach: 29px; margin-left: 12px; }
.place-note { --reach: calc(100vw - 612px); margin: 102px 0 54px 2px; }
.journal-note { --reach: 120px; }
```
